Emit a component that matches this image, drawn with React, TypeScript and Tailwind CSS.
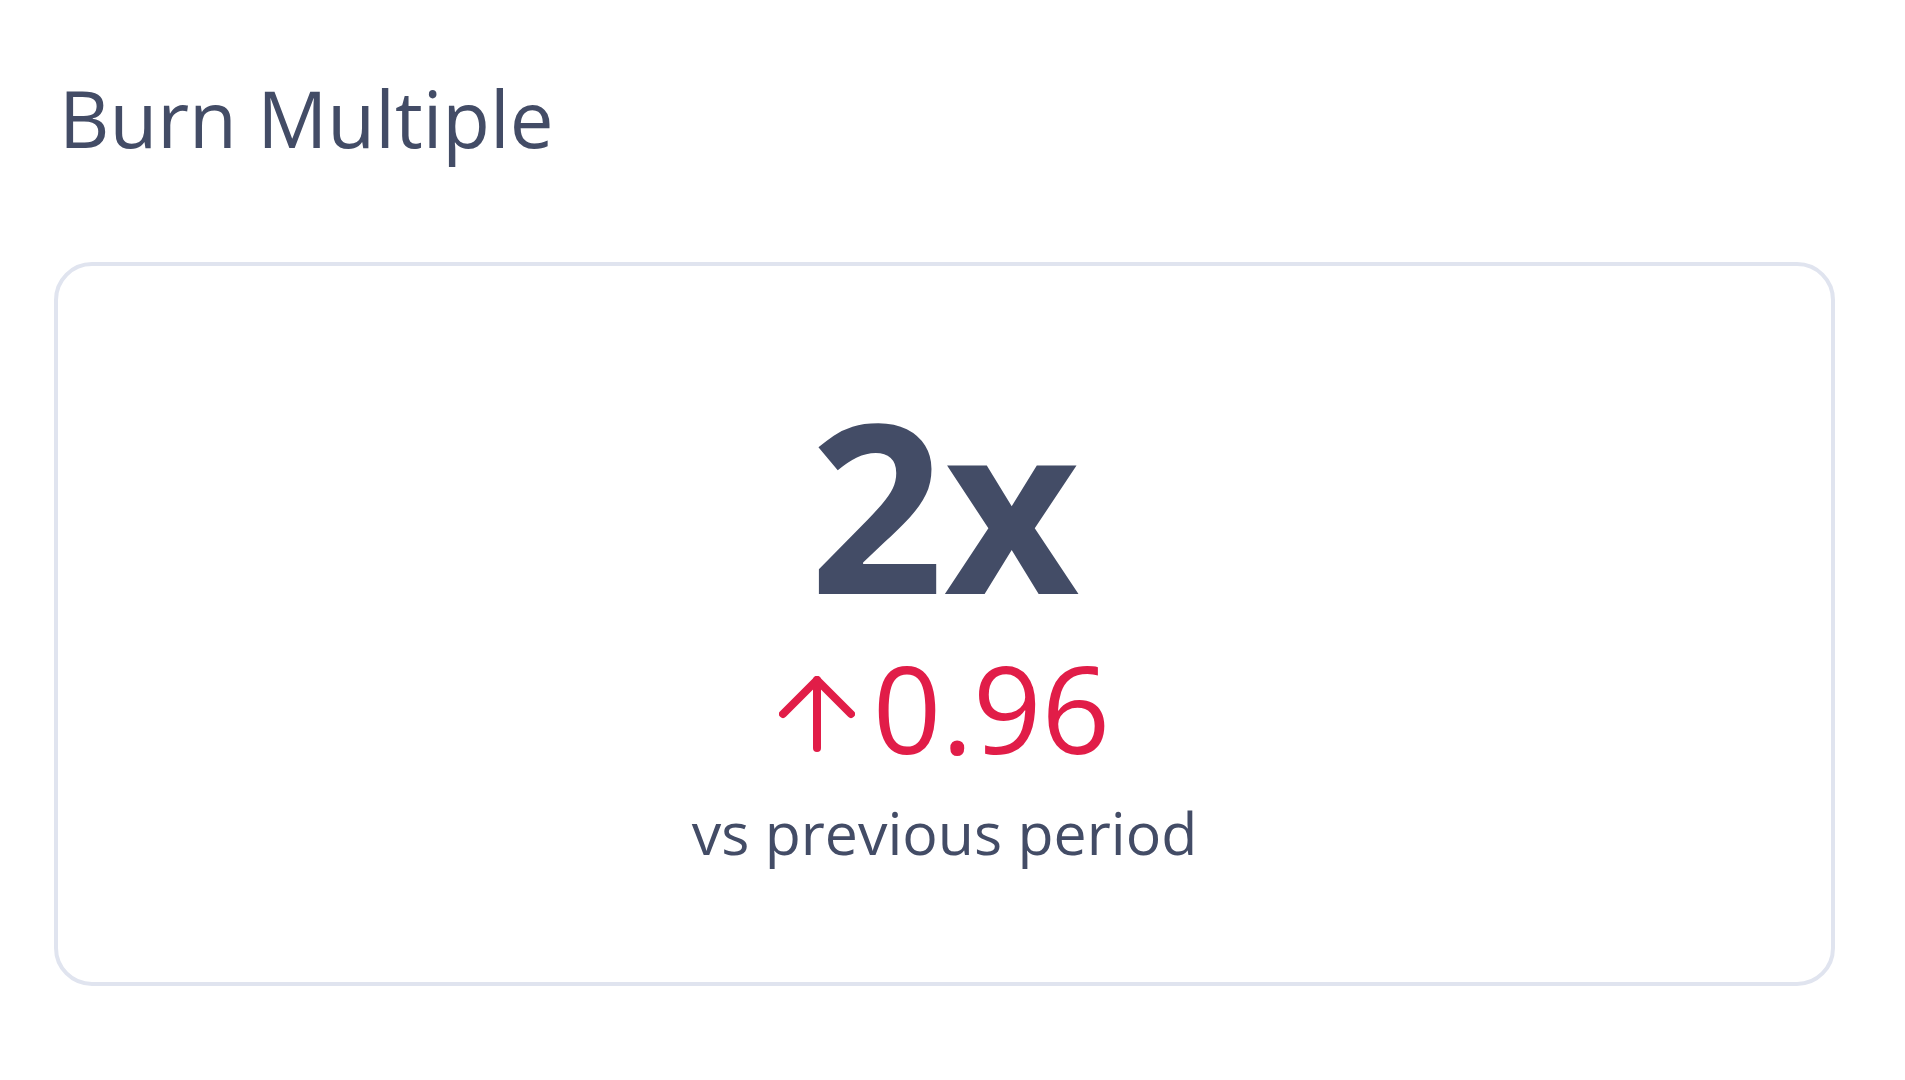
import React from "react";

export default function App() {
  return (
    <div className="min-h-screen w-full bg-white" style={{ fontFamily: '"Open Sans", "Noto Sans", sans-serif' }}>
      <div className="pl-[54px] pr-[70px] pt-[79px]">
        <div className="ml-[5px] text-[78px] leading-none text-[#434c66]">Burn Multiple</div>
        <div className="mt-[105px] flex h-[724px] flex-col items-center rounded-[38px] border-[4px] border-[#e0e4ef] pt-[120px]">
          <div className="text-[235px] font-bold leading-none text-[#434c66]">2x</div>
          <div className="mt-[27px] flex items-center text-[120px] leading-none text-[#e11d48]">
            <svg width="76" height="76" viewBox="0 0 76 76" fill="none" stroke="currentColor" strokeWidth="8" strokeLinecap="round" strokeLinejoin="round" className="mr-[18px] mt-[11px]">
              <path d="M4 38 L38 4 L72 38" />
              <path d="M38 4 V72" />
            </svg>
            <span>0.96</span>
          </div>
          <div className="mt-[35px] text-[59px] leading-none text-[#434c66]">vs previous period</div>
        </div>
      </div>
    </div>
  );
}
